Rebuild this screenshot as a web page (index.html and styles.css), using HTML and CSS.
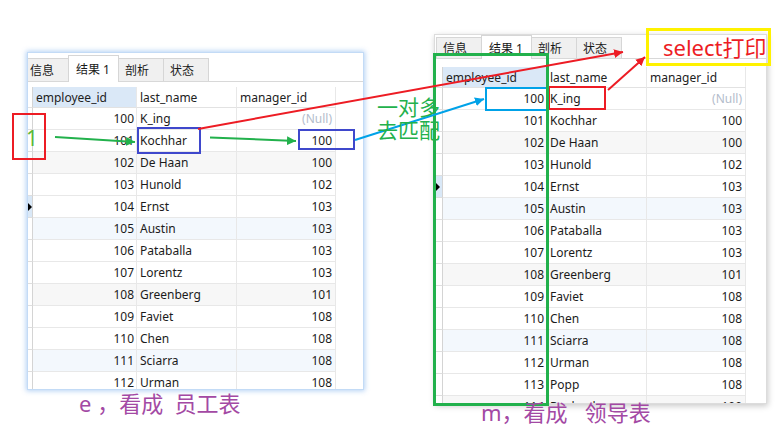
FILE: index.html
```html
<!DOCTYPE html>
<html>
<head>
<meta charset="utf-8">
<link rel="stylesheet" href="styles.css">
</head>
<body>
<div class="stage">

  <div class="win win-left">
    <div class="tabbar">
      <div class="tab first">信息</div>
      <div class="tab active">结果 1</div>
      <div class="tab">剖析</div>
      <div class="tab">状态</div>
    </div>
    <div class="grid">
      <div class="row hdr"><div class="c ci"></div><div class="c ce sorted">employee_id</div><div class="c cn">last_name</div><div class="c cm">manager_id</div></div>
      <div class="row"><div class="c ci"></div><div class="c ce">100</div><div class="c cn">K_ing</div><div class="c cm null">(Null)</div></div>
      <div class="row"><div class="c ci"></div><div class="c ce">101</div><div class="c cn">Kochhar</div><div class="c cm">100</div></div>
      <div class="row gray"><div class="c ci"></div><div class="c ce">102</div><div class="c cn">De Haan</div><div class="c cm">100</div></div>
      <div class="row"><div class="c ci"></div><div class="c ce">103</div><div class="c cn">Hunold</div><div class="c cm">102</div></div>
      <div class="row"><div class="c ci cur"><span class="tri"></span></div><div class="c ce">104</div><div class="c cn">Ernst</div><div class="c cm">103</div></div>
      <div class="row blue"><div class="c ci"></div><div class="c ce">105</div><div class="c cn">Austin</div><div class="c cm">103</div></div>
      <div class="row"><div class="c ci"></div><div class="c ce">106</div><div class="c cn">Pataballa</div><div class="c cm">103</div></div>
      <div class="row"><div class="c ci"></div><div class="c ce">107</div><div class="c cn">Lorentz</div><div class="c cm">103</div></div>
      <div class="row gray"><div class="c ci"></div><div class="c ce">108</div><div class="c cn">Greenberg</div><div class="c cm">101</div></div>
      <div class="row"><div class="c ci"></div><div class="c ce">109</div><div class="c cn">Faviet</div><div class="c cm">108</div></div>
      <div class="row"><div class="c ci"></div><div class="c ce">110</div><div class="c cn">Chen</div><div class="c cm">108</div></div>
      <div class="row blue"><div class="c ci"></div><div class="c ce">111</div><div class="c cn">Sciarra</div><div class="c cm">108</div></div>
      <div class="row"><div class="c ci"></div><div class="c ce">112</div><div class="c cn">Urman</div><div class="c cm">108</div></div>
    </div>
  </div>

  <div class="win win-right">
    <div class="tabbar">
      <div class="tab first">信息</div>
      <div class="tab active">结果 1</div>
      <div class="tab">剖析</div>
      <div class="tab">状态</div>
    </div>
    <div class="grid">
      <div class="row hdr"><div class="c ci"></div><div class="c ce sorted">employee_id</div><div class="c cn">last_name</div><div class="c cm">manager_id</div></div>
      <div class="row"><div class="c ci"></div><div class="c ce">100</div><div class="c cn">K_ing</div><div class="c cm null">(Null)</div></div>
      <div class="row"><div class="c ci"></div><div class="c ce">101</div><div class="c cn">Kochhar</div><div class="c cm">100</div></div>
      <div class="row gray"><div class="c ci"></div><div class="c ce">102</div><div class="c cn">De Haan</div><div class="c cm">100</div></div>
      <div class="row"><div class="c ci"></div><div class="c ce">103</div><div class="c cn">Hunold</div><div class="c cm">102</div></div>
      <div class="row"><div class="c ci cur"><span class="tri"></span></div><div class="c ce">104</div><div class="c cn">Ernst</div><div class="c cm">103</div></div>
      <div class="row blue"><div class="c ci"></div><div class="c ce">105</div><div class="c cn">Austin</div><div class="c cm">103</div></div>
      <div class="row"><div class="c ci"></div><div class="c ce">106</div><div class="c cn">Pataballa</div><div class="c cm">103</div></div>
      <div class="row"><div class="c ci"></div><div class="c ce">107</div><div class="c cn">Lorentz</div><div class="c cm">103</div></div>
      <div class="row gray"><div class="c ci"></div><div class="c ce">108</div><div class="c cn">Greenberg</div><div class="c cm">101</div></div>
      <div class="row"><div class="c ci"></div><div class="c ce">109</div><div class="c cn">Faviet</div><div class="c cm">108</div></div>
      <div class="row"><div class="c ci"></div><div class="c ce">110</div><div class="c cn">Chen</div><div class="c cm">108</div></div>
      <div class="row blue"><div class="c ci"></div><div class="c ce">111</div><div class="c cn">Sciarra</div><div class="c cm">108</div></div>
      <div class="row"><div class="c ci"></div><div class="c ce">112</div><div class="c cn">Urman</div><div class="c cm">108</div></div>
      <div class="row"><div class="c ci"></div><div class="c ce">113</div><div class="c cn">Popp</div><div class="c cm">108</div></div>
      <div class="row gray"><div class="c ci"></div><div class="c ce">114</div><div class="c cn">Raphaely</div><div class="c cm">100</div></div>
    </div>
  </div>

  <svg class="overlay" width="776" height="431" viewBox="0 0 776 431">
    <defs>
      <marker id="mg" viewBox="0 0 10 10" refX="10" refY="5" markerWidth="9" markerHeight="9" markerUnits="userSpaceOnUse" orient="auto"><path d="M0,0 L10,5 L0,10 z" fill="#22b14c"/></marker>
      <marker id="mr" viewBox="0 0 10 10" refX="10" refY="5" markerWidth="9" markerHeight="9" markerUnits="userSpaceOnUse" orient="auto"><path d="M0,0 L10,5 L0,10 z" fill="#ed1c24"/></marker>
      <marker id="mb" viewBox="0 0 10 10" refX="10" refY="5" markerWidth="9" markerHeight="9" markerUnits="userSpaceOnUse" orient="auto"><path d="M0,0 L10,5 L0,10 z" fill="#00a2e8"/></marker>
    </defs>
    <rect x="13" y="114" width="32" height="45" fill="none" stroke="#ed1c24" stroke-width="2"/>
    <rect x="138" y="128" width="62" height="25" fill="none" stroke="#3f48cc" stroke-width="2"/>
    <rect x="299" y="130" width="55" height="19" fill="none" stroke="#3f48cc" stroke-width="2"/>
    <rect x="486" y="88" width="61" height="22" fill="none" stroke="#00a2e8" stroke-width="2"/>
    <rect x="549" y="87" width="56" height="22" fill="none" stroke="#ed1c24" stroke-width="2"/>
    <rect x="647.5" y="29.5" width="122" height="35" fill="none" stroke="#fff200" stroke-width="3"/>
    <rect x="434.5" y="54.5" width="113" height="350" fill="none" stroke="#22b14c" stroke-width="3"/>
    <line x1="55" y1="137" x2="135" y2="142" stroke="#22b14c" stroke-width="2" marker-end="url(#mg)"/>
    <line x1="210" y1="137.5" x2="296" y2="141" stroke="#22b14c" stroke-width="2" marker-end="url(#mg)"/>
    <line x1="198" y1="129" x2="623" y2="52" stroke="#ed1c24" stroke-width="2" marker-end="url(#mr)"/>
    <line x1="355" y1="140" x2="484" y2="99" stroke="#00a2e8" stroke-width="2" marker-end="url(#mb)"/>
    <line x1="608" y1="90" x2="645" y2="57" stroke="#ed1c24" stroke-width="2" marker-end="url(#mr)"/>
  </svg>

  <div class="note note-one">1</div>
  <div class="note note-match">一对多<br>去匹配</div>
  <div class="note note-select">select打印</div>
  <div class="note note-e">e&nbsp;，看成&nbsp;&nbsp;员工表</div>
  <div class="note note-m">m，看成&nbsp;&nbsp;&nbsp;领导表</div>
</div>
</body>
</html>
```
FILE: styles.css
```css
html, body {
  margin: 0;
  padding: 0;
  background: #ffffff;
}

.stage {
  position: relative;
  width: 776px;
  height: 431px;
  overflow: hidden;
  background: #ffffff;
  font-family: "Noto Sans", "Noto Sans CJK SC", sans-serif;
}

.win {
  position: absolute;
  background: #ffffff;
  overflow: hidden;
  display: flex;
  flex-direction: column;
  z-index: 1;
}

.win-left {
  left: 28px;
  top: 53px;
  width: 335px;
  height: 336px;
  box-shadow: 0 0 0 1px #c3dbf6, 0 0 5px 2px rgba(90, 155, 230, 0.45);
}

.win-right {
  left: 435px;
  top: 35px;
  width: 331px;
  height: 368px;
  box-shadow: 0 0 0 1px #dcdcdc, 1px 2px 6px 1px rgba(0, 0, 0, 0.22);
}

.tabbar {
  flex: none;
  display: flex;
  align-items: flex-end;
  box-sizing: border-box;
  border-bottom: 1px solid #d8d8d8;
}

.win-left .tabbar { height: 29px; }
.win-right .tabbar { height: 24px; }

.tab {
  box-sizing: border-box;
  width: 46px;
  padding-left: 6px;
  border: 1px solid #d6d6d6;
  border-bottom: none;
  background: #f0f0f0;
  margin-right: -1px;
  display: flex;
  align-items: center;
  font-size: 12px;
  color: #1a1a1a;
  font-family: "Noto Sans", "Noto Sans CJK SC", sans-serif;
  white-space: nowrap;
}

.win-left .tab { height: 23px; }
.win-right .tab { height: 21px; }

.win-left .tab.first { margin-left: -5px; }
.win-right .tab.first { margin-left: 1px; }

.tab.active {
  width: 51px;
  padding-left: 7px;
  background: #ffffff;
  margin-bottom: -1px;
  position: relative;
  z-index: 1;
}

.win-left .tab.active { height: 27px; }
.win-right .tab.active { height: 24px; }

.win-left .grid { margin-top: 5px; }
.win-right .grid { margin-top: 8px; }

.row {
  display: flex;
  height: 22px;
}

.row.hdr { height: 21px; }

.c {
  box-sizing: border-box;
  height: 100%;
  border-right: 1px solid #e8e8e8;
  border-bottom: 1px solid #e8e8e8;
  display: flex;
  align-items: center;
  white-space: nowrap;
  overflow: hidden;
  font-size: 12px;
  color: #1b1b1b;
}

.ci {
  border-right-color: #d4d4d4;
  border-bottom-color: #dedede;
}

.win-left .ci { width: 5px; }
.win-right .ci { width: 8px; }

.ce {
  width: 104px;
  justify-content: flex-end;
  padding-right: 2px;
}

.cn {
  width: 100px;
  padding-left: 3px;
}

.cm {
  width: 99px;
  justify-content: flex-end;
  padding-right: 3px;
}

.hdr .c {
  justify-content: flex-start;
  padding-left: 3px;
  padding-right: 0;
  color: #222222;
  border-bottom-color: #e2e2e2;
}

.hdr .sorted { background: #dae8f7; }

.row.gray .ce, .row.gray .cn, .row.gray .cm { background: #f7f7f7; }
.row.blue .ce, .row.blue .cn, .row.blue .cm { background: #f3f8fd; }

.null { color: #b3bccb; }

.ci.cur { background: #d9e8f7; }

.tri {
  width: 0;
  height: 0;
  border-left: 4px solid #000000;
  border-top: 4px solid transparent;
  border-bottom: 4px solid transparent;
}

.win-right .tri { margin-left: 1px; }

.overlay {
  position: absolute;
  left: 0;
  top: 0;
  z-index: 2;
  pointer-events: none;
}

.note {
  position: absolute;
  z-index: 3;
  white-space: nowrap;
  font-family: "Noto Sans", "Noto Sans CJK SC", sans-serif;
}

.note-one {
  left: 26px;
  top: 128px;
  font-size: 21px;
  line-height: 20px;
  color: #5cb83a;
}

.note-match {
  left: 377px;
  top: 95px;
  font-size: 21px;
  line-height: 23px;
  color: #22b14c;
  font-family: "Noto Sans CJK SC", sans-serif;
}

.note-select {
  left: 663px;
  top: 34px;
  font-size: 22px;
  line-height: 26px;
  color: #ed1c24;
}

.note-e {
  left: 79px;
  top: 390px;
  font-size: 22px;
  line-height: 26px;
  color: #a349a4;
}

.note-m {
  left: 481px;
  top: 399px;
  font-size: 22px;
  line-height: 26px;
  color: #a349a4;
}
```
